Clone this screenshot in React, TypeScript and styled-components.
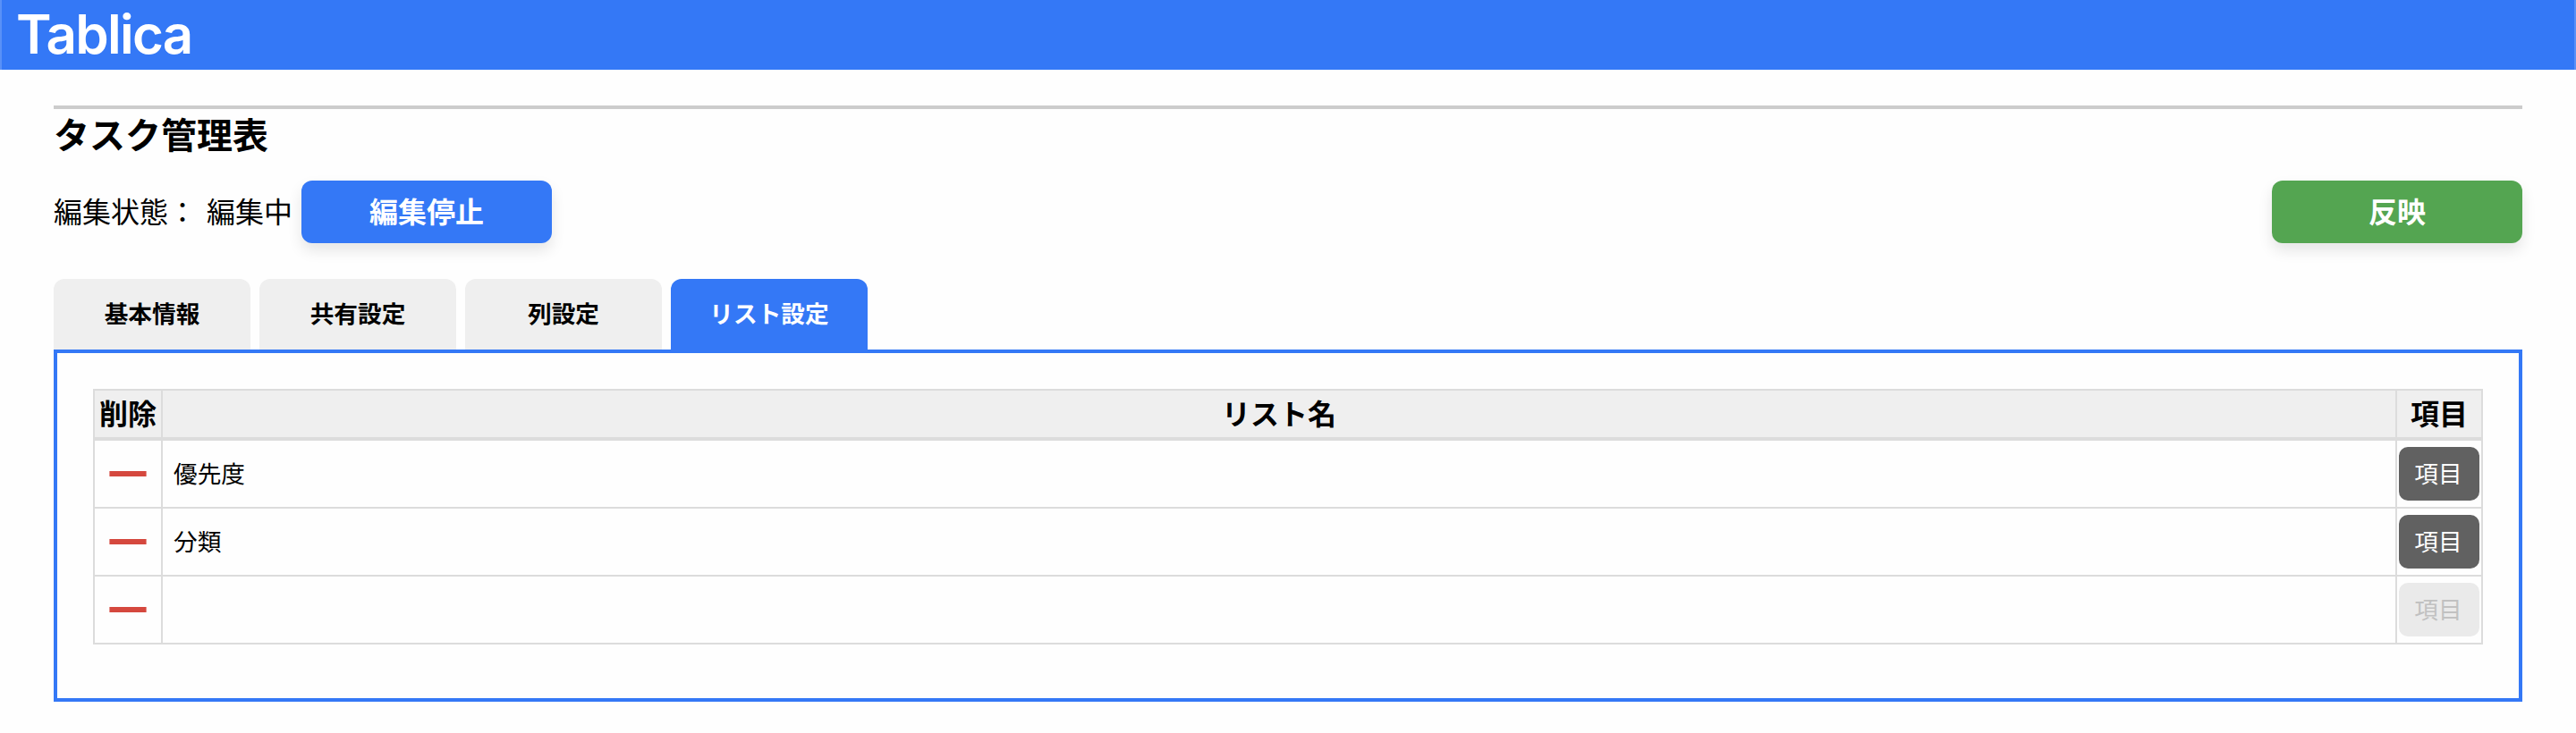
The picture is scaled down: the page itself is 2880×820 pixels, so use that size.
import React, { useState } from 'react';
import styled, { createGlobalStyle } from 'styled-components';

const GlobalStyle = createGlobalStyle`
  * {
    box-sizing: border-box;
  }

  body {
    margin: 0;
    background-color: #fefefe;
    color: #000;
    font-family: 'Noto Sans CJK JP', sans-serif;
  }

  button {
    font-family: inherit;
    border: none;
    padding: 0;
    cursor: pointer;
  }
`;

const Header = styled.header`
  display: flex;
  height: 78px;
  padding-left: 16px;
  background-color: #3478f6;
  border: solid #5990f7;
  border-width: 0 2px;
`;

const Logo = styled.div`
  color: white;
  font-family: Inter, sans-serif;
  font-size: 60px;
  font-weight: 600;
  line-height: 76px;
  letter-spacing: -1.7px;
`;

const Main = styled.main`
  padding: 40px 60px 35px;
`;

const Title = styled.h1`
  height: 80px;
  margin: 0;
  border-top: 4px solid #ccc;
  font-size: 40px;
  font-weight: 700;
  line-height: 55px;
`;

const Toolbar = styled.div`
  display: flex;
  align-items: center;
  justify-content: space-between;
  height: 70px;
  margin-top: 4px;
`;

const Status = styled.div`
  display: flex;
  height: 70px;
  font-size: 32px;
  line-height: 66px;
`;

const StatusValue = styled.span`
  width: 106px;
  margin-left: 11px;
`;

const ActionButton = styled.button<{ $color: string }>`
  width: 280px;
  height: 70px;
  padding-bottom: 4px;
  border-radius: 12px;
  background-color: ${({ $color }) => $color};
  color: white;
  font-size: 32px;
  font-weight: 700;
  line-height: 66px;
  box-shadow: 0 8px 16px rgb(0 0 0 / 10%);
`;

const Tabs = styled.nav`
  display: flex;
  gap: 10px;
  margin-top: 40px;
`;

const Tab = styled.button<{ $active: boolean }>`
  width: 220px;
  height: 79px;
  padding-bottom: 4px;
  border-radius: 12px 12px 0 0;
  background-color: ${({ $active }) => ($active ? '#3478f6' : '#efefef')};
  color: ${({ $active }) => ($active ? 'white' : 'black')};
  font-size: 26.667px;
  font-weight: 700;
`;

const Panel = styled.section`
  padding: 40px 40px 60px;
  border: 4px solid #3478f6;
`;

const Table = styled.table`
  width: 100%;
  table-layout: fixed;
  border-collapse: separate;
  border-spacing: 0;
`;

const HeadCell = styled.th<{ $width?: number }>`
  width: ${({ $width }) => ($width ? `${$width}px` : 'auto')};
  height: 58px;
  padding: 0 0 4px;
  border: solid #dcdcdc;
  border-width: 2px 2px 4px 0;
  background-color: #efefef;
  font-size: 32px;
  font-weight: 700;
  line-height: 48px;

  &:first-child {
    border-left-width: 2px;
  }
`;

const Cell = styled.td<{ $align?: string }>`
  height: 76px;
  padding: ${({ $align }) => ($align === 'center' ? '0' : '0 12px 3px')};
  border: solid #dcdcdc;
  border-width: 0 2px 2px 0;
  font-size: 26.667px;
  line-height: 60px;
  text-align: ${({ $align }) => $align || 'left'};

  &:first-child {
    border-left-width: 2px;
  }
`;

const DeleteButton = styled.button`
  display: block;
  height: 60px;
  margin: 0 auto;
  background: none;

  svg {
    display: block;
  }
`;

const ItemButton = styled.button`
  display: block;
  width: 90px;
  height: 60px;
  margin: 0 auto;
  padding: 0 2px 3px 0;
  border-radius: 10px;
  background-color: #616161;
  color: white;
  font-size: 26.667px;
  line-height: 57px;

  &:disabled {
    background-color: #eaeaea;
    color: #c1c1c1;
    cursor: default;
  }
`;

const MinusIcon = () => (
  <svg width="42" height="6" viewBox="0 0 42 6">
    <rect x="0.4" width="41.2" height="6" fill="#d5483e" />
  </svg>
);

const tabs = ['基本情報', '共有設定', '列設定', 'リスト設定'];
const lists = ['優先度', '分類', ''];

const App = () => {
  const [activeTab, setActiveTab] = useState(3);

  return (
    <>
      <GlobalStyle />
      <Header>
        <Logo>Tablica</Logo>
      </Header>
      <Main>
        <Title>タスク管理表</Title>
        <Toolbar>
          <Status>
            <span>編集状態：</span>
            <StatusValue>編集中</StatusValue>
            <ActionButton $color="#3478f6">編集停止</ActionButton>
          </Status>
          <ActionButton $color="#54a551">反映</ActionButton>
        </Toolbar>
        <Tabs>
          {tabs.map((tab, index) => (
            <Tab key={tab} $active={index === activeTab} onClick={() => setActiveTab(index)}>
              {tab}
            </Tab>
          ))}
        </Tabs>
        <Panel>
          <Table>
            <thead>
              <tr>
                <HeadCell $width={78}>削除</HeadCell>
                <HeadCell>リスト名</HeadCell>
                <HeadCell $width={96}>項目</HeadCell>
              </tr>
            </thead>
            <tbody>
              {lists.map((name, index) => (
                <tr key={index}>
                  <Cell $align="center">
                    <DeleteButton aria-label="削除">
                      <MinusIcon />
                    </DeleteButton>
                  </Cell>
                  <Cell>{name}</Cell>
                  <Cell $align="center">
                    <ItemButton disabled={!name}>項目</ItemButton>
                  </Cell>
                </tr>
              ))}
            </tbody>
          </Table>
        </Panel>
      </Main>
    </>
  );
};

export default App;
